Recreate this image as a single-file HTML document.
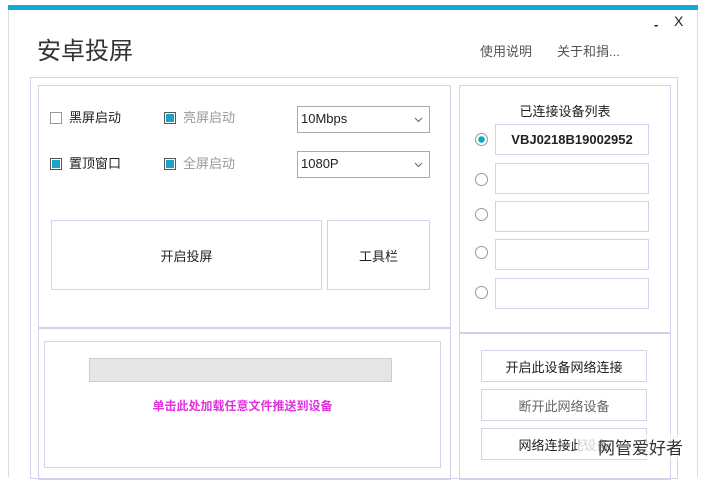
<!DOCTYPE html>
<html><head><meta charset="utf-8"><style>
body{margin:0;width:708px;height:477px;background:#fff;position:relative;overflow:hidden;font-family:"Liberation Sans","Noto Sans CJK SC",sans-serif;color:#222}
.a{position:absolute;box-sizing:border-box}
.b{border:1.5px solid #d4d2ea}
.t{font-size:13px;line-height:16px}
.cb{width:12px;height:12px;border:1px solid #999;background:#fff}
.cb.on{background:#1aa3c8;border:1px solid #555;box-shadow:inset 0 0 0 1px #fff}
.sel{border:1.5px solid #aaa;font-size:13px;padding:4px 0 0 3px;background:#fff}
.rd{width:13px;height:13px;border-radius:50%;border:1px solid #999;background:#fff}
.btn{border:1.5px solid #d4d2ea;display:flex;align-items:center;justify-content:center;font-size:13px}
</style></head><body>
<div class="a" style="left:8px;top:5px;width:690px;height:5px;background:#15a9d8"></div>
<div class="a" style="left:8px;top:10px;width:1px;height:467px;background:#ddd"></div>
<div class="a" style="left:697px;top:10px;width:1px;height:467px;background:#ddd"></div>
<div class="a" style="left:37px;top:31px;font-size:24px;color:#333">安卓投屏</div>
<div class="a t" style="left:480px;top:44px;color:#555">使用说明</div>
<div class="a t" style="left:557px;top:44px;color:#555">关于和捐...</div>
<div class="a" style="left:654px;top:17px;font-size:13px;font-weight:bold">-</div>
<div class="a" style="left:674px;top:13px;font-size:14px">X</div>
<div class="a b" style="left:30px;top:77px;width:648px;height:402px"></div>
<div class="a b" style="left:38px;top:85px;width:413px;height:395px"></div>
<div class="a" style="left:38px;top:327px;width:413px;height:1.5px;background:#d4d2ea"></div>
<div class="a b" style="left:459px;top:85px;width:212px;height:395px"></div>
<div class="a" style="left:459px;top:332px;width:212px;height:1.5px;background:#d4d2ea"></div>

<div class="a cb" style="left:50px;top:112px"></div><div class="a t" style="left:69px;top:110px">黑屏启动</div>
<div class="a cb on" style="left:164px;top:112px"></div><div class="a t" style="left:183px;top:110px;color:#999">亮屏启动</div>
<div class="a cb on" style="left:50px;top:158px"></div><div class="a t" style="left:69px;top:156px">置顶窗口</div>
<div class="a cb on" style="left:164px;top:158px"></div><div class="a t" style="left:183px;top:156px;color:#999">全屏启动</div>
<div class="a sel" style="left:297px;top:106px;width:133px;height:27px">10Mbps<svg class="a" style="left:116px;top:10px" width="9" height="6"><path d="M1 1L4.5 4.5L8 1" fill="none" stroke="#666"/></svg></div>
<div class="a sel" style="left:297px;top:151px;width:133px;height:27px">1080P<svg class="a" style="left:116px;top:10px" width="9" height="6"><path d="M1 1L4.5 4.5L8 1" fill="none" stroke="#666"/></svg></div>
<div class="a btn" style="left:51px;top:220px;width:271px;height:70px">开启投屏</div>
<div class="a btn" style="left:327px;top:220px;width:103px;height:70px">工具栏</div>
<div class="a b" style="left:44px;top:341px;width:397px;height:127px"></div>
<div class="a" style="left:89px;top:358px;width:303px;height:24px;background:#e6e6e6;border:1px solid #ccc;box-sizing:border-box"></div>
<div class="a" style="left:44px;top:397px;width:397px;text-align:center;font-size:12px;font-weight:bold;color:#e030e0">单击此处加载任意文件推送到设备</div>

<div class="a t" style="left:459px;top:104px;width:212px;text-align:center">已连接设备列表</div>
<div class="a rd" style="left:475px;top:133px;background:radial-gradient(circle,#1aa3c8 3px,#fff 3.5px)"></div>
<div class="a btn" style="left:495px;top:124px;width:154px;height:31px;font-weight:bold">VBJ0218B19002952</div>
<div class="a rd" style="left:475px;top:173px"></div><div class="a b" style="left:495px;top:163px;width:154px;height:31px"></div>
<div class="a rd" style="left:475px;top:208px"></div><div class="a b" style="left:495px;top:201px;width:154px;height:31px"></div>
<div class="a rd" style="left:475px;top:246px"></div><div class="a b" style="left:495px;top:239px;width:154px;height:31px"></div>
<div class="a rd" style="left:475px;top:286px"></div><div class="a b" style="left:495px;top:278px;width:154px;height:31px"></div>
<div class="a btn" style="left:481px;top:350px;width:166px;height:32px">开启此设备网络连接</div>
<div class="a btn" style="left:481px;top:389px;width:166px;height:32px;color:#666">断开此网络设备</div>
<div class="a btn" style="left:481px;top:428px;width:166px;height:32px">网络连接此设备</div>
<div class="a" style="left:578px;top:434px;width:20px;height:22px;background:rgba(255,255,255,.8);color:#999;font-size:14px">◌</div>
<div class="a" style="left:598px;top:434px;font-size:17px;color:#333;background:rgba(255,255,255,.6)">网管爱好者</div>
</body></html>
